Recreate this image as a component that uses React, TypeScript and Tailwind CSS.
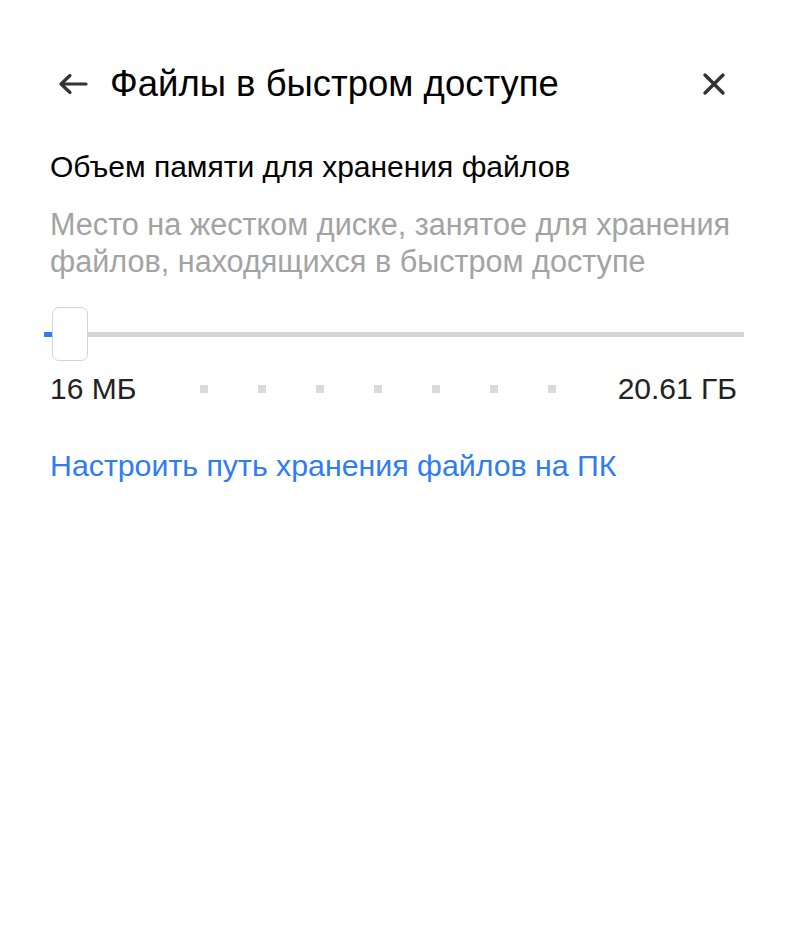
const font = { fontFamily: '"Liberation Sans", Arial, sans-serif' }

function App() {
  return (
    <div className="w-[790px] h-[952px] bg-white text-[#1a1a1a]" style={font}>
      <Header />
      <div className="px-[50px]">
        <p className="mt-[46px] text-[30px] leading-[34px] text-black">Объем памяти для хранения файлов</p>
        <p className="mt-[22px] text-[30.6px] leading-[37px] text-[#a3a3a3]">
          Место на жестком диске, занятое для хранения файлов, находящихся в быстром доступе
        </p>
        <Slider />
        <Labels />
        <a className="block mt-[42px] text-[30.3px] leading-[36px] text-[#2e7cf6]">
          Настроить путь хранения файлов на ПК
        </a>
      </div>
    </div>
  )
}

function Header() {
  return (
    <div className="flex items-center justify-between pl-[58px] pr-[63px] pt-[64px]">
      <div className="flex items-center">
        <svg width="30" height="22" viewBox="0 0 30 22" fill="none" stroke="#333" strokeWidth="3.2" strokeLinecap="round" strokeLinejoin="round">
          <path d="M28 11H4" />
          <path d="M12 2.5L3 11l9 8.5" />
        </svg>
        <h1 className="ml-[22px] text-[36.5px] leading-[40px] text-black">Файлы в быстром доступе</h1>
      </div>
      <svg width="26" height="26" viewBox="0 0 26 26" fill="none" stroke="#333" strokeWidth="3.4" strokeLinecap="round">
        <path d="M4 4l18 18M22 4L4 22" />
      </svg>
    </div>
  )
}

function Slider() {
  return (
    <div className="relative ml-[-6px] mr-[-4px] mt-[27px] h-[54px] flex items-center">
      <div className="h-[5px] w-full bg-[#d6d6d6]">
        <div className="h-full w-[8px] bg-[#2e7cf6]" />
      </div>
      <div className="absolute left-[8px] top-0 w-[36px] h-[54px] rounded-[7px] border border-[#d4d4d4] bg-white" />
    </div>
  )
}

function Labels() {
  const dots = [0, 1, 2, 3, 4, 5, 6]
  return (
    <div className="mt-[11px] flex items-center text-[30px] leading-[34px] text-[#222]">
      <span className="w-[150px]">16 МБ</span>
      <div className="flex gap-[50px]">
        {dots.map((d) => (
          <span key={d} className="block w-[8px] h-[8px] bg-[#dadada]" />
        ))}
      </div>
      <span className="flex-1 text-right pr-[3px]">20.61 ГБ</span>
    </div>
  )
}

export default App
